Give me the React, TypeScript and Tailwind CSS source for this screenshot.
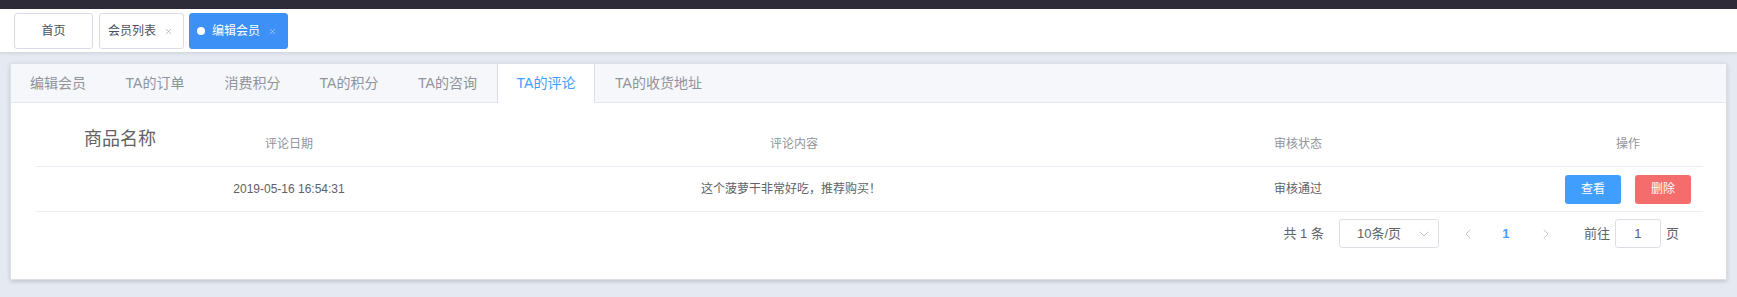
import { X } from "lucide-react"

const tabs = [
  { label: "编辑会员", w: "w-[94px]" },
  { label: "TA的订单", w: "w-[100px]" },
  { label: "消费积分", w: "w-[95px]" },
  { label: "TA的积分", w: "w-[98px]" },
  { label: "TA的咨询", w: "w-[99px]" },
  { label: "TA的评论", w: "w-[98px]", active: true },
  { label: "TA的收货地址", w: "w-[127px]" },
]

function Chevron({ dir }: { dir: "left" | "right" | "down" }) {
  const pts = dir === "left" ? "6,1 2,5 6,9" : dir === "right" ? "2,1 6,5 2,9" : "1,3 5,7 9,3"
  return (
    <svg width={dir === "down" ? 10 : 8} height="10" viewBox={dir === "down" ? "0 0 10 10" : "0 0 8 10"} fill="none">
      <polyline points={pts} stroke="#c0c4cc" strokeWidth="1" strokeLinejoin="round" strokeLinecap="round" />
    </svg>
  )
}

export default function App() {
  return (
    <div className="w-[1737px] h-[297px] overflow-hidden bg-[#e5e9f2] font-['Liberation_Sans','Noto_Sans_CJK_SC',sans-serif]">
      <div className="h-[9px] bg-[#2d2b38]" />

      {/* tags view */}
      <div className="h-[44px] bg-white border-b border-[#d5d9e0] shadow-[0_1px_3px_rgba(0,0,0,0.08)] flex items-start pt-[4px] pl-[14px]">
        <div className="w-[79px] h-[36px] border border-[#d8dce5] rounded-[3px] flex items-center justify-center text-[12px] text-[#495060]">
          首页
        </div>
        <div className="ml-[6px] w-[85px] h-[36px] border border-[#d8dce5] rounded-[3px] flex items-center pl-[8px] text-[12px] text-[#495060]">
          <span>会员列表</span>
          <X size={9} className="ml-[8px] text-[#8a8f99]" strokeWidth={1.5} />
        </div>
        <div className="ml-[5px] w-[99px] h-[36px] bg-[#3d90f5] border border-[#3d90f5] rounded-[3px] flex items-center pl-[7px] text-[12px] text-white">
          <span className="w-[8px] h-[8px] rounded-full bg-white" />
          <span className="ml-[7px]">编辑会员</span>
          <X size={9} className="ml-[8px] text-[#cfe2fb]" strokeWidth={1.5} />
        </div>
      </div>

      <div className="px-[10px] pt-[10px]">
        <div className="h-[217px] bg-white border border-[#dcdfe6] shadow-[0_2px_4px_rgba(0,0,0,0.12),0_0_6px_rgba(0,0,0,0.04)]">
          {/* tabs header */}
          <div className="h-[39px] bg-[#f5f7fa] border-b border-[#e4e7ed] flex items-start">
            {tabs.map((t) => (
              <div
                key={t.label}
                className={`${t.w} h-[39px] flex items-center justify-center text-[14px] ${
                  t.active
                    ? "bg-white text-[#409eff] border-x border-[#dcdfe6]"
                    : "text-[#909399]"
                }`}
              >
                {t.label}
              </div>
            ))}
          </div>

          {/* content */}
          <div className="pt-[19px] pl-[24px] pr-[23px]">
            <div className="grid grid-cols-[170px_168px_842px_162px_1fr] h-[45px] border-b border-[#ebeef5] text-[12px] text-[#909399]">
              <div className="flex items-center justify-center pb-[9px] text-[18px] text-[#606266]">商品名称</div>
              <div className="flex items-center justify-center">评论日期</div>
              <div className="flex items-center justify-center">评论内容</div>
              <div className="flex items-center justify-center pl-[4px]">审核状态</div>
              <div className="flex items-center justify-center pl-[176px]">操作</div>
            </div>
            <div className="grid grid-cols-[170px_168px_842px_162px_1fr] h-[45px] border-b border-[#ebeef5] text-[12px] text-[#606266]">
              <div />
              <div className="flex items-center justify-center">2019-05-16 16:54:31</div>
              <div className="flex items-center justify-center pr-[6px]">这个菠萝干非常好吃，推荐购买！</div>
              <div className="flex items-center justify-center pl-[4px]">审核通过</div>
              <div className="flex items-center justify-center pl-[176px] gap-[14px]">
                <button className="w-[56px] h-[29px] rounded-[3px] bg-[#409eff] text-white text-[12px]">查看</button>
                <button className="w-[56px] h-[29px] rounded-[3px] bg-[#f56c6c] text-white text-[12px]">删除</button>
              </div>
            </div>

            {/* pagination */}
            <div className="mt-[7px] flex items-center justify-end pr-[24px] h-[29px] text-[13px] text-[#606266]">
              <span>共 1 条</span>
              <div className="ml-[15px] w-[100px] h-[29px] border border-[#dcdfe6] rounded-[3px] flex items-center pl-[17px] pr-[9px]">
                <span className="flex-1">10条/页</span>
                <Chevron dir="down" />
              </div>
              <div className="ml-[14px] w-[30px] flex justify-center">
                <Chevron dir="left" />
              </div>
              <div className="ml-[5px] w-[36px] text-center font-bold text-[#409eff]">1</div>
              <div className="ml-[7px] w-[30px] flex justify-center">
                <Chevron dir="right" />
              </div>
              <span className="ml-[23px]">前往</span>
              <div className="ml-[5px] w-[46px] h-[29px] border border-[#dcdfe6] rounded-[3px] flex items-center justify-center">
                1
              </div>
              <span className="ml-[5px]">页</span>
            </div>
          </div>
        </div>
      </div>
    </div>
  )
}
